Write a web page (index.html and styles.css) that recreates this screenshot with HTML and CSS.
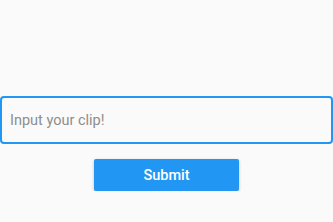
FILE: index.html
```html
<!DOCTYPE html>
<html lang="en">
<head>
  <meta charset="UTF-8" />
  <meta name="viewport" content="width=device-width, initial-scale=1.0"/>
  <title>Clip</title>
  <link rel="stylesheet" href="styles.css">
</head>
<body>
  <div class="form">
    <input class="clip-input" type="text" placeholder="Input your clip!" />
    <button class="submit-btn">Submit</button>
  </div>
</body>
</html>
```
FILE: styles.css
```css
html, body { margin: 0; padding: 0; background: #fafafa; font-family: Roboto, "Noto Sans", sans-serif; }
.form { display: flex; flex-direction: column; align-items: center; padding-top: 96px; }
.clip-input { box-sizing: border-box; width: 333px; height: 48px; border: 2px solid #2196f3; border-radius: 4px; background: #fafafa; padding: 0 8px; font-family: Roboto, sans-serif; font-size: 14.5px; color: #333; outline: none; }
.clip-input::placeholder { color: #8e8e8e; }
.submit-btn { margin-top: 15px; width: 145px; height: 32px; border: none; border-radius: 2px; background: #2196f3; color: #fff; font-family: Roboto, sans-serif; font-size: 14.5px; font-weight: 500; box-shadow: 0 1px 3px rgba(0,0,0,0.25); }
```
